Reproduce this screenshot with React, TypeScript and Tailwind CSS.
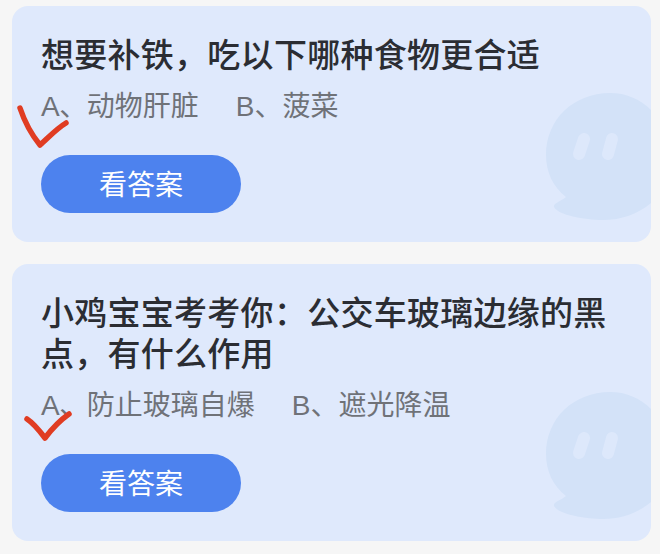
const QuizCard = ({
  title,
  answer,
  optionB,
  tick,
}: {
  title: string;
  answer: string;
  optionB: string;
  tick: React.ReactNode;
}) => {
  return (
    <section className="relative overflow-hidden rounded-2xl bg-[#dfe9fc] pt-[29px] pr-6 pb-[29px] pl-[29px]">
      {/* bubble watermark */}
      <svg
        viewBox="0 0 105 127"
        className="absolute right-0 bottom-[22px] h-[127px] w-[105px]"
      >
        <path
          d="M0 62C0 26 28 0 64 0C80 0 94 6 105 17V110C92 121 75 127 57 127C38 127 12 122 8 114C7 110 14 109 20 104C7 94 0 79 0 62Z"
          fill="#d3e2f8"
        />
        <path d="M38 46L33 61" stroke="#dde8fb" strokeWidth="12" strokeLinecap="round" />
        <path d="M66 46L62 61" stroke="#dde8fb" strokeWidth="12" strokeLinecap="round" />
      </svg>

      <h2 className="relative text-[33px] leading-[41px] font-medium tracking-[0.27px] text-[#2b2d33]">
        {title}
      </h2>
      <div className="relative mt-[11px] flex gap-[37px] text-[28px] leading-[40px] text-[#6f7278]">
        <span>
          <span className="tracking-[-0.5px]">A、</span>
          {answer}
        </span>
        <span>{optionB}</span>
      </div>
      <button className="relative mt-[28px] flex h-[58px] w-[200px] items-center justify-center rounded-full bg-[#4d82ee] pt-[3px] text-[28px] text-white">
        看答案
      </button>
      {tick}
    </section>
  );
};

export default function App() {
  return (
    <main
      className="flex h-[554px] w-[660px] flex-col gap-[22px] bg-[#f6f6f6] pt-[6px] pr-[9px] pl-3"
      style={{ fontFamily: '"Liberation Sans", "Noto Sans CJK SC", sans-serif' }}
    >
      <QuizCard
        title="想要补铁，吃以下哪种食物更合适"
        answer="动物肝脏"
        optionB="B、菠菜"
        tick={
          <svg viewBox="0 0 60 50" className="absolute top-[98px] left-[2px] h-[50px] w-[60px]">
            <path
              d="M6 4C10 16 17 30 26 41C33 35 42 25 52 19"
              fill="none"
              stroke="#e03c22"
              strokeWidth="5.5"
              strokeLinecap="round"
              strokeLinejoin="round"
            />
          </svg>
        }
      />
      <QuizCard
        title="小鸡宝宝考考你：公交车玻璃边缘的黑点，有什么作用"
        answer="防止玻璃自爆"
        optionB="B、遮光降温"
        tick={
          <svg viewBox="0 0 60 40" className="absolute top-[142px] left-[8px] h-[40px] w-[60px]">
            <path
              d="M7 13C13 17 19 24 25 32C31 24 39 15 49 8"
              fill="none"
              stroke="#e03c22"
              strokeWidth="5.5"
              strokeLinecap="round"
              strokeLinejoin="round"
            />
          </svg>
        }
      />
    </main>
  );
}
